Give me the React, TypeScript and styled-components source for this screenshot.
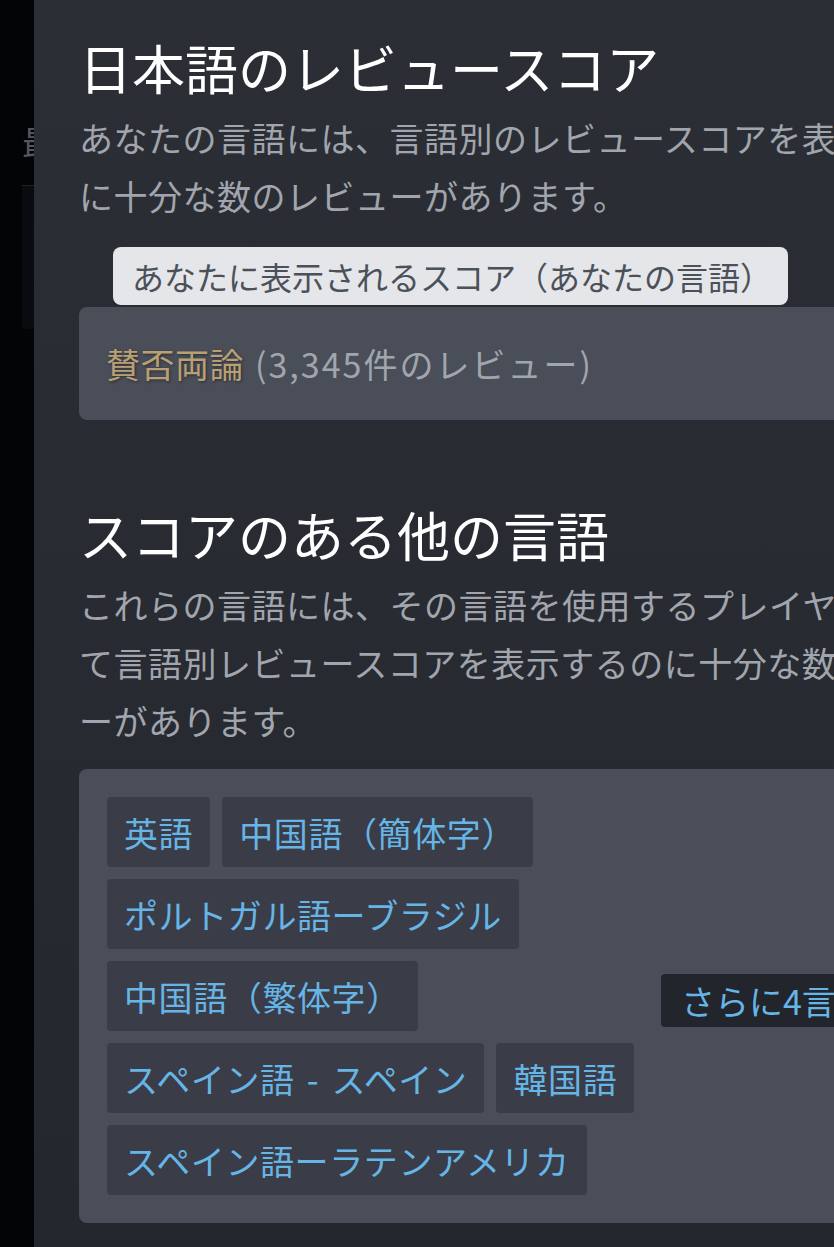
import styled, { createGlobalStyle } from 'styled-components'

const GlobalStyle = createGlobalStyle`
  html, body {
    margin: 0;
    padding: 0;
    background: #030405;
    overflow: hidden;
  }
  body {
    font-family: "Noto Sans CJK JP", "Noto Sans", sans-serif;
  }
`

const Screen = styled.div`
  position: relative;
  width: 834px;
  height: 1247px;
  overflow: hidden;
  background: #030405;
`

// the store page sitting behind the modal
const Backdrop = styled.div`
  padding: 122px 0 0 22px;
`

const BackdropTitle = styled.div`
  font-size: 34px;
  line-height: 40px;
  color: #55585e;
  white-space: nowrap;
`

const BackdropCard = styled.div`
  margin-top: 23px;
  width: 300px;
  height: 143px;
  background: #080b0f;
  border-top: 1px solid #1c2128;
`

const Panel = styled.div`
  position: absolute;
  top: 0;
  left: 34px;
  bottom: 0;
  width: 900px;
  padding: 33px 45px 0;
  background: linear-gradient(180deg, #2b2e35 0%, #272a31 60%, #24272e 100%);
`

const Title = styled.h2<{ $gap?: number }>`
  margin: ${(p) => p.$gap ?? 0}px 0 7px;
  font-size: 53px;
  line-height: 69px;
  font-weight: 400;
  color: #ffffff;
  white-space: nowrap;
`

const Desc = styled.p`
  margin: 0;
  font-size: 34px;
  line-height: 58px;
  letter-spacing: 0.5px;
  color: #a1a5ad;
`

const ScoreSection = styled.div`
  margin-top: 22px;
`

const Tab = styled.div`
  display: inline-block;
  margin-left: 34px;
  height: 58px;
  line-height: 58px;
  padding: 0 16px 0 19px;
  background: #e4e6ea;
  color: #4c5059;
  font-size: 32px;
  border-radius: 8px;
  white-space: nowrap;
`

const ScoreBox = styled.div`
  margin-top: 2px;
  height: 113px;
  display: flex;
  align-items: center;
  padding: 0 27px;
  background: #4a4e59;
  border-radius: 8px;
  font-size: 34px;
  white-space: nowrap;
`

const Rating = styled.span`
  color: #b9a074;
  letter-spacing: 0.5px;
  text-shadow: 1px 1px 3px rgba(0, 0, 0, 0.45);
`

const Count = styled.span`
  color: #a0a5ae;
  margin-left: 11px;
  letter-spacing: 2px;
`

const LangBox = styled.div`
  margin-top: 19px;
  display: flex;
  align-items: center;
  gap: 12px;
  padding: 28px;
  background: #4a4e59;
  border-radius: 8px;
`

const TagList = styled.div`
  display: flex;
  flex-wrap: wrap;
  gap: 12px;
  width: 542px;
  flex-shrink: 0;
`

const Tag = styled.div`
  height: 70px;
  display: flex;
  align-items: center;
  padding: 0 17px;
  background: #3a3d47;
  color: #66b5e6;
  font-size: 34px;
  letter-spacing: 0.6px;
  word-spacing: 4px;
  border-radius: 4px;
  white-space: nowrap;
`

const MoreButton = styled.div`
  margin-top: 9px;
  height: 53px;
  display: flex;
  align-items: center;
  padding: 0 20px;
  background: #22252b;
  color: #66b5e6;
  font-size: 34px;
  border-radius: 4px;
  white-space: nowrap;
`

const languages = [
  '英語',
  '中国語（簡体字）',
  'ポルトガル語ーブラジル',
  '中国語（繁体字）',
  'スペイン語 - スペイン',
  '韓国語',
  'スペイン語ーラテンアメリカ',
]

export default function App() {
  return (
    <>
      <GlobalStyle />
      <Screen>
        <Backdrop>
          <BackdropTitle>最新のレビュー</BackdropTitle>
          <BackdropCard />
        </Backdrop>
        <Panel>
          <Title>日本語のレビュースコア</Title>
          <Desc>
            あなたの言語には、言語別のレビュースコアを表示するのに十分な数のレビューがあります。
          </Desc>
          <ScoreSection>
            <Tab>あなたに表示されるスコア（あなたの言語）</Tab>
            <ScoreBox>
              <Rating>賛否両論</Rating>
              <Count>(3,345件のレビュー)</Count>
            </ScoreBox>
          </ScoreSection>

          <Title $gap={80}>スコアのある他の言語</Title>
          <Desc>
            これらの言語には、その言語を使用するプレイヤーによって言語別レビュースコアを表示するのに十分な数のレビューがあります。
          </Desc>
          <LangBox>
            <TagList>
              {languages.map((l) => (
                <Tag key={l}>{l}</Tag>
              ))}
            </TagList>
            <MoreButton>さらに4言語を表示</MoreButton>
          </LangBox>
        </Panel>
      </Screen>
    </>
  )
}
